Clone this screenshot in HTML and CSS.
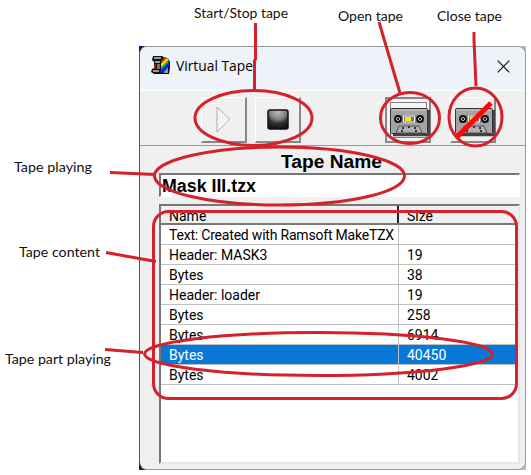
FILE: index.html
```html
<!DOCTYPE html>
<html lang="en">
<head>
<meta charset="utf-8">
<title>Virtual Tape</title>
<link rel="stylesheet" href="styles.css">
</head>
<body>
<div class="desktop">
<main class="window">
  <header class="titlebar">
    <svg class="app-icon" width="20" height="20" viewBox="0 0 20 20">
      <path d="M2 1h9l3 2h3l2 4v6l-1 6H3l-3-2 1-3 2-1V7L1 5z" fill="#111"/>
      <path d="M3 2h7v2H3zM2 15h6v2H2zM13 13h4v5h-4zM4 6h5v2H4z" fill="#999"/>
      <path d="M3 9h2v5H3z" fill="#a01818"/>
      <path d="M6 9h3v5H6z" fill="#777744"/>
      <path d="M10 6l4-4 2 1-6 7z" fill="#e92b12"/><path d="M10 9l6-6 2 2-8 8z" fill="#ffe800"/><path d="M10 12l7-7 1 3-8 8z" fill="#10b83b"/><path d="M8 17L18 7v4l-6 7z" fill="#1022dd"/>
    </svg>
    <h1 class="title"><svg width="84" height="20"><text x="0" y="15" textLength="77" lengthAdjust="spacingAndGlyphs">Virtual Tape</text></svg></h1>
    <svg class="close" width="13" height="13" viewBox="0 0 13 13"><path d="M.7.7l11.6 11.6M12.3.7L.7 12.3" stroke="#111" stroke-width="1.2"/></svg>
  </header>
  <div class="toolbar">
    <div class="tool play"><svg width="18" height="30" viewBox="0 0 18 30"><path d="M2 2v25l13-12.500z" fill="#f4f4f4" stroke="#aaa"/><path d="M3 28l13-13" stroke="#fff"/></svg></div>
    <div class="tool stop"><svg width="22" height="21" viewBox="0 0 22 21"><defs><radialGradient id="metal" cx=".5" cy=".1" r=".85"><stop stop-color="#bbb"/><stop offset=".45" stop-color="#858585"/><stop offset=".7" stop-color="#333"/><stop offset="1" stop-color="#161616"/></radialGradient></defs><rect x="1" y="1" width="20" height="19" rx="2" fill="url(#metal)" stroke="#111" stroke-width="1.500"/></svg></div>
    <div class="tool open"><svg width="46" height="46" viewBox="0 0 46 46"><rect x="3" y="3" width="40" height="40" fill="#f4f4f4"/><rect x="5.500" y="5.500" width="36" height="35" fill="none" stroke="#111" stroke-dasharray="1 1"/><use href="#cassette" x="5" y="11"/></svg></div>
    <div class="tool eject"><svg width="46" height="46" viewBox="0 0 46 46"><use href="#cassette" x="5" y="11"/><path d="M6 41L41 6" stroke="#fa0909" stroke-width="5"/></svg></div>
  </div>
  <section class="content">
    <h2 class="caption"><svg width="104" height="23"><text x="1" y="18" textLength="101" lengthAdjust="spacingAndGlyphs">Tape Name</text></svg></h2>
    <div class="field"><svg width="100" height="21"><text x="1" y="17" textLength="94" lengthAdjust="spacingAndGlyphs">Mask III.tzx</text></svg></div>
    <div class="list">
      <div class="row head"><span>Name</span><span>Size</span></div>
      <div class="row"><span class="long">Text: Created with Ramsoft MakeTZX</span><span></span></div>
      <div class="row"><span>Header: MASK3</span><span>19</span></div>
      <div class="row"><span>Bytes</span><span>38</span></div>
      <div class="row"><span>Header: loader</span><span>19</span></div>
      <div class="row"><span>Bytes</span><span>258</span></div>
      <div class="row"><span>Bytes</span><span>6914</span></div>
      <div class="row selected"><span>Bytes</span><span>40450</span></div>
      <div class="row"><span>Bytes</span><span>4002</span></div>
    </div>
  </section>
</main>
</div>
<svg class="defs" width="0" height="0"><defs><g id="cassette">
  <path d="M3 27h36V2" fill="none" stroke="#444" stroke-width="2.500"/>
  <rect x=".5" y=".5" width="37" height="25" rx="1" fill="#a4a4a4" stroke="#333"/>
  <path d="M2 2h34" stroke="#ccc"/>
  <rect x="4" y="7" width="30" height="8" rx="2" fill="#888"/>
  <circle cx="8" cy="11" r="3" fill="#ccc" stroke="#111" stroke-width="1.800"/><circle cx="30" cy="11" r="3" fill="#ccc" stroke="#111" stroke-width="1.800"/>
  <path d="M6 9l4 4M10 9l-4 4M28 9l4 4M32 9l-4 4" stroke="#222"/>
  <rect x="13.500" y="8" width="11" height="6" fill="#777" stroke="#eee"/><rect x="15" y="9" width="6" height="4" fill="#f8ef00"/>
  <path d="M6 25l3-7h20l3 7z" fill="#b0b0b0" stroke="#555"/><path d="M12 20h2m4-1h2m4 1h2M11 23h2m12 0h2" stroke="#333" stroke-width="2"/>
</g></defs></svg>
<svg class="notes" width="531" height="475" viewBox="0 0 531 475">
  <g class="marks">
    <ellipse cx="253.500" cy="118" rx="58.500" ry="27.500"/>
    <ellipse cx="410" cy="118" rx="29.500" ry="25.500"/>
    <ellipse cx="475.500" cy="117" rx="26.500" ry="29"/>
    <ellipse cx="279.500" cy="176" rx="125" ry="29"/>
    <ellipse cx="318.500" cy="354" rx="174" ry="21.500"/>
    <rect x="153.500" y="211.500" width="363" height="187" rx="15"/>
    <path d="M255.500 23v36l-1 2v30M379 22l21 71M474 32v8l2 46M110 172.500l45 2M106 252.500l50 9M105 349.500l38 3"/>
  </g>
  <g class="labels">
    <text x="194" y="17.500" textLength="94" lengthAdjust="spacingAndGlyphs">Start/Stop tape</text>
    <text x="338" y="20.500" textLength="65" lengthAdjust="spacingAndGlyphs">Open tape</text>
    <text x="437" y="20.500" textLength="65" lengthAdjust="spacingAndGlyphs">Close tape</text>
    <text x="14" y="171.500" textLength="78" lengthAdjust="spacingAndGlyphs">Tape playing</text>
    <text x="19" y="257" textLength="81" lengthAdjust="spacingAndGlyphs">Tape content</text>
    <text x="5" y="364" textLength="106" lengthAdjust="spacingAndGlyphs">Tape part playing</text>
  </g>
</svg>
</body>
</html>
```
FILE: styles.css
```css
* { box-sizing: border-box; }
body { margin: 0; width: 531px; height: 475px; background: #fff; overflow: hidden; }
svg { display: block; flex: none; }
h1, h2 { margin: 0; font-weight: normal; }
.desktop { margin: 46px 0 0 139px; width: 387px; height: 424px; background: linear-gradient(90deg, #17145b 0 84px, #bbb 84px); }
.window { width: 387px; height: 424px; border: 1px solid #999; border-left-color: #555; border-radius: 8px; overflow: hidden; background: #f0f0f0; font-family: Roboto, sans-serif; }
.titlebar { height: 43px; display: flex; align-items: flex-start; padding: 8px 15px 0 11px; background: #eef3f9; }
.title { margin: 1px 0 0 5px; font: 15px "Open Sans", sans-serif; }
.close { margin: 5px 0 0 auto; }
.toolbar { height: 56px; display: flex; padding: 6px 0 0 61px; border-top: 1px solid #fff; border-bottom: 1px solid #999; }
.tool { width: 46px; height: 46px; display: grid; place-items: center; border: 1px solid #fff; border-right: 2px solid #888; border-bottom: 2px solid #888; }
.stop { margin-left: 8px; }
.open { margin-left: 84px; border: 2px solid #888; }
.eject { margin-left: 19px; }
.tool > svg { margin: auto; }
.tool.open > svg { margin: -2px; }
.tool.eject > svg { margin: -1px; }
.content { padding: 4px 5px 0 19px; }
.caption { display: flex; justify-content: center; height: 23px; padding-right: 16px; font: bold 18px "Liberation Sans", sans-serif; }
.field { height: 24px; border: 2px solid #777; border-right: 1px solid #fff; border-bottom: 1px solid #fff; background: #fff; font: bold 18px "Liberation Sans", sans-serif; }
.list { height: 260px; margin-top: 7px; background: #fff; border: 2px solid #777; border-right: 2px solid #e6e6e6; border-bottom: 2px solid #e6e6e6; }
.row { display: grid; grid-template-columns: 238px 1fr; height: 20px; margin-right: 1px; border-bottom: 1px solid #c0c0c0; font-size: 14px; line-height: 20px; }
.row span { padding-left: 8px; white-space: nowrap; }
.row span:first-child { border-right: 1px solid #c0c0c0; }
.row .long { letter-spacing: -.2px; }
.row.head { height: 19px; margin-right: 0; background: #f0f0f0; border-bottom: 2px solid #777; line-height: 21px; overflow: hidden; }
.row.head span:first-child { border-right: 2px solid #222; }
.selected { background: #0878d7; color: #fff; }
.defs { position: absolute; }
.notes { position: absolute; top: 0; left: 0; pointer-events: none; }
.marks { fill: none; stroke: #d4212b; stroke-width: 3; }
.labels { font: 14px Lato, sans-serif; fill: #111; }
```
